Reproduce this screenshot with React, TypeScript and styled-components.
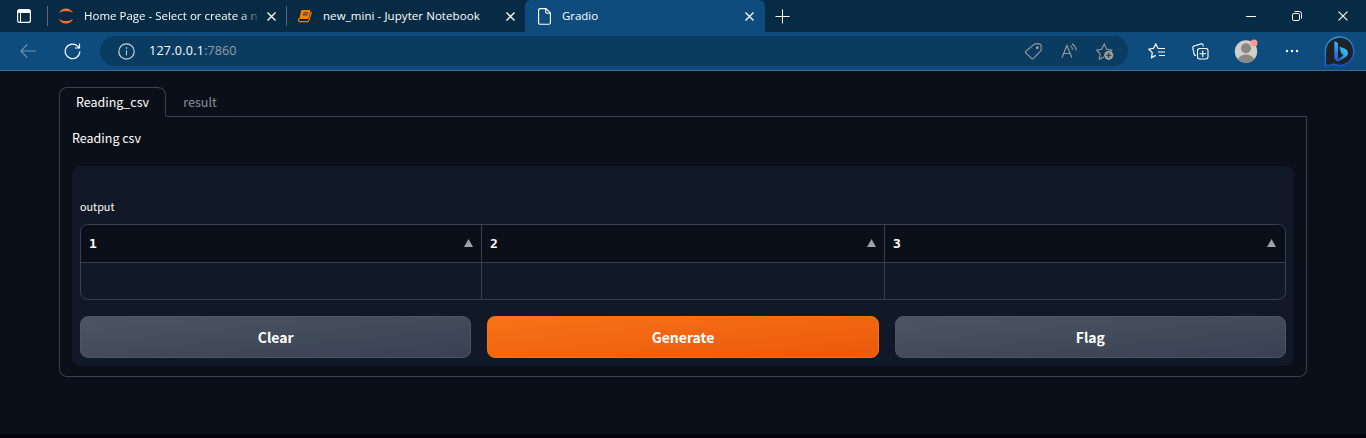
import React from 'react';
import styled, { createGlobalStyle, css } from 'styled-components';

const Global = createGlobalStyle`
  * { box-sizing: border-box; }
  body { margin: 0; background: #0b0f19; overflow: hidden; }
  button { font: inherit; margin: 0; padding: 0; border: 0; background: none; color: inherit; }
  svg { display: block; flex: none; }
`;

const Window = styled.div`
  height: 438px;
  display: flex;
  flex-direction: column;
  background: #0b0f19;
  color: #fff;
`;

const TitleBar = styled.header`
  height: 32px;
  flex: none;
  display: flex;
  align-items: stretch;
  background: #082b45;
  font: 11.5px/32px 'Open Sans', 'Noto Sans', sans-serif;
`;

const WorkspaceButton = styled.button`
  width: 47px;
  display: flex;
  align-items: center;
  padding-left: 17px;
`;

const Divider = styled.span`
  width: 1px;
  height: 20px;
  margin-top: 6px;
  background: #546b7d;
`;

const BrowserTab = styled.div<{ $width: number; $active?: boolean }>`
  width: ${p => p.$width}px;
  flex: none;
  display: flex;
  align-items: center;
  padding-left: 10px;
  ${p => p.$active && css`
    padding-left: 13px;
    background: #0d4c7c;
    border-radius: 6px 6px 0 0;
  `}
`;

const TabTitle = styled.span<{ $gap: number; $spacing: number; $fade?: boolean }>`
  flex: 1;
  min-width: 0;
  margin-left: ${p => p.$gap}px;
  letter-spacing: ${p => p.$spacing}px;
  white-space: nowrap;
  ${p => p.$fade && css`
    margin-right: -4px;
    mask-image: linear-gradient(90deg, #000 calc(100% - 20px), transparent 100%);
  `}
`;

const CloseTab = styled.button<{ $width?: number }>`
  width: ${p => p.$width ?? 30}px;
  flex: none;
  padding-left: 10px;
`;

const WindowControls = styled.div`
  display: flex;
  margin-left: auto;
`;

const ControlButton = styled.button<{ $width?: number }>`
  width: ${p => p.$width ?? 46}px;
  display: grid;
  place-items: center;
`;

const NavBar = styled.nav`
  height: 39px;
  flex: none;
  display: flex;
  align-items: center;
  background: #0d4c7c;
  border-bottom: 1px solid #3d7095;
`;

const NavButton = styled.button<{ $width: number; $indent?: number }>`
  width: ${p => p.$width}px;
  flex: none;
  height: 38px;
  padding-left: ${p => p.$indent ?? 0}px;
  display: grid;
  place-items: center;
`;

const AddressBar = styled.div`
  width: 1028px;
  flex: none;
  height: 30px;
  margin-left: 12px;
  display: flex;
  align-items: center;
  padding: 0 5px 0 17.5px;
  border-radius: 15px;
  background: #0a3b60;
`;

const Url = styled.span`
  margin-left: 14.5px;
  flex: 1;
  font: 12.5px/30px 'Open Sans', 'Noto Sans', sans-serif;
  letter-spacing: 0.27px;
  span { color: #9d9d9d; letter-spacing: 0.1px; }
`;

const Page = styled.main`
  flex: 1;
  padding: 16px 59px 0;
  font-family: 'Noto Sans CJK SC', sans-serif;
`;

const TabRow = styled.div`
  height: 30px;
  display: flex;
  &::after { content: ''; flex: 1; border-bottom: 1px solid #374151; }
`;

const PageTab = styled.button<{ $selected?: boolean }>`
  width: ${p => (p.$selected ? 107 : 68)}px;
  height: 30px;
  font-size: 12.5px;
  line-height: 27px;
  padding-bottom: 1px;
  color: #898f99;
  border: 1px solid transparent;
  border-bottom-color: #374151;
  ${p => p.$selected && css`
    color: #fff;
    border-color: #374151;
    border-bottom-color: transparent;
    border-radius: 8px 8px 0 0;
  `}
`;

const TabPanel = styled.section`
  height: 260px;
  padding: 11px 12px 12px;
  border: 1px solid #374151;
  border-top: 0;
  border-radius: 0 0 8px 8px;
`;

const Heading = styled.p`
  margin: 0 0 18px;
  height: 20px;
  font-size: 12.5px;
  line-height: 20px;
  color: #fff;
`;

const Form = styled.div`
  height: 200px;
  padding: 32px 8px 8px;
  background: #111827;
  border-radius: 8px;
`;

const Label = styled.div`
  height: 26px;
  font-size: 10.8px;
  line-height: 16px;
  color: #fff;
`;

const Grid = styled.div`
  height: 76px;
  margin-bottom: 16px;
  display: grid;
  grid-template-columns: 401px 403px 1fr;
  grid-template-rows: 38px 1fr;
  border: 1px solid #374151;
  border-radius: 8px;
  overflow: hidden;
`;

const Cell = styled.div<{ $head?: boolean }>`
  display: flex;
  align-items: center;
  justify-content: space-between;
  padding: 0 8.5px 0 8px;
  font: bold 13px/20px 'DejaVu Sans Mono', monospace;
  border-right: 1px solid #374151;
  svg { margin-bottom: 1px; }
  &:nth-child(3n) { border-right: 0; padding-right: 9px; }
  ${p => p.$head && css`background: #0b0f19; border-bottom: 1px solid #374151;`}
`;

const Actions = styled.div`
  display: flex;
  gap: 16px;
`;

const ActionButton = styled.button<{ $primary?: boolean }>`
  flex: 1;
  height: 42px;
  border: 1px solid ${p => (p.$primary ? '#f97316' : '#4b5563')};
  border-radius: 8px;
  background: ${p => p.$primary
    ? 'linear-gradient(to bottom right, #f97316, #ea580c)'
    : 'linear-gradient(to bottom right, #4b5563, #374151)'};
  font-size: 14px;
  line-height: 40px;
  font-weight: 700;
`;

const BottomEdge = styled.footer`
  height: 4px;
  background: #05020b;
`;

const CloseGlyph = ({ size = 9 }: { size?: number }) => (
  <svg width={size} height={size} viewBox="0 0 9 9" stroke="#fff" strokeWidth={size > 9 ? 1 : 1.25}>
    <path d="M.5.5l8 8M8.5.5l-8 8" />
  </svg>
);

const JupyterLogo = () => (
  <svg width="16" height="16" viewBox="0 0 16 16" fill="#f37726">
    <path d="M.9 5.3C2.2 2 5 .4 8 .4s5.800 1.600 7.100 4.900C13.300 3.700 10.900 3 8 3S2.700 3.700.9 5.300z" />
    <path d="M.9 10.700C2.200 14 5 15.600 8 15.600s5.800-1.600 7.100-4.900C13.300 12.300 10.900 13 8 13s-5.300-.7-7.100-2.300z" />
  </svg>
);

const NotebookIcon = () => (
  <svg width="16" height="16" viewBox="0 0 16 16">
    <path d="M4.900 2h7.800q1.100 0 .8 1.100L11.400 10.200q-.3.900-1.300.9H2.200L4.100 3Q4.300 2 4.900 2z" fill="#f98000" />
    <path d="M2 10.500Q.8 13.600 2.900 13.600h7.500q1.100 0 1.400-1L14.400 4" fill="none" stroke="#f98000" strokeWidth="1.200" />
    <path d="M6.200 4.900h5M5.600 6.900h5" stroke="#082b45" strokeWidth=".9" />
  </svg>
);

const PageIcon = () => (
  <svg width="13" height="17" viewBox="0 0 13 17" fill="none" stroke="#fff" strokeWidth="1.100">
    <path d="M2.200.6H8L12.400 5v9.700q0 1.600-1.600 1.600H2.200Q.6 16.300.6 14.700V2.200Q.6.600 2.200.6zM7.700.8v3.100q0 1.300 1.300 1.300h3.200" />
  </svg>
);

const BingIcon = () => (
  <svg width="32" height="32" viewBox="0 0 32 32">
    <defs>
      <linearGradient id="ring" x1="0" y1="0" x2=".3" y2="1">
        <stop stopColor="#2ba0df" /><stop offset="1" stopColor="#1d52d5" />
      </linearGradient>
      <linearGradient id="stem" x1="0" y1="0" x2="0" y2="1">
        <stop stopColor="#38b5f5" /><stop offset="1" stopColor="#2256dd" />
      </linearGradient>
      <linearGradient id="bowl" x1="1" y1="0" x2="0" y2="1">
        <stop stopColor="#38dced" /><stop offset=".5" stopColor="#2d9af2" /><stop offset="1" stopColor="#2361e6" />
      </linearGradient>
    </defs>
    <path d="M2.400 30.300V15.900A14.200 14.200 0 1 1 10.500 29Q7.500 30.600 2.400 30.300z" fill="#202225" stroke="url(#ring)" strokeWidth="1.400" />
    <path d="M11.300 6.300l2.600 1q1.100.5 1.100 1.700v13l1 1-2.500 2.500q-2.200-.4-2.200-2.800z" fill="url(#stem)" />
    <path d="M17.200 11.700l5.200 2.300q2.600 1.300 2.600 4.200 0 2.400-2.200 3.800l-6 3.600q-2.700 1.300-4.800-.2 2.600.2 4.600-1.700l3.800-3.500-1.500-1.200q-.7-.5-.9-1.400l-1.300-4.400q-.3-1.500.5-1.500z" fill="url(#bowl)" />
  </svg>
);

const SortArrow = () => (
  <svg width="9" height="8" viewBox="0 0 9 8" fill="#9ca3af"><path d="M4.500 0L9 8H0z" /></svg>
);

export default function App() {
  return (
    <Window>
      <Global />
      <TitleBar>
        <WorkspaceButton>
          <svg width="14" height="14" viewBox="0 0 14 14" fill="none" stroke="#fff">
            <rect x=".6" y=".6" width="12.800" height="12.800" rx="2" strokeWidth="1.200" />
            <path d="M1 2.500h12" strokeWidth="3" /><path d="M3.500 4v9" />
          </svg>
        </WorkspaceButton>
        <Divider />
        <BrowserTab $width={238}>
          <JupyterLogo />
          <TabTitle $gap={10} $spacing={0} $fade>Home Page - Select or create a n</TabTitle>
          <CloseTab $width={29}><CloseGlyph /></CloseTab>
        </BrowserTab>
        <Divider />
        <BrowserTab $width={238}>
          <NotebookIcon />
          <TabTitle $gap={10} $spacing={0.07}>new_mini - Jupyter Notebook</TabTitle>
          <CloseTab $width={29}><CloseGlyph /></CloseTab>
        </BrowserTab>
        <BrowserTab $width={240} $active>
          <PageIcon />
          <TabTitle $gap={11} $spacing={-0.05}>Gradio</TabTitle>
          <CloseTab><CloseGlyph /></CloseTab>
        </BrowserTab>
        <ControlButton $width={35}>
          <svg width="15" height="15" viewBox="0 0 15 15" stroke="#fff"><path d="M7.500.5v14M.5 7.500h14" /></svg>
        </ControlButton>
        <WindowControls>
          <ControlButton><svg width="10" height="10" viewBox="0 0 10 10" stroke="#fff"><path d="M0 5.500h10" /></svg></ControlButton>
          <ControlButton>
            <svg width="10" height="10" viewBox="0 0 10 10" fill="none" stroke="#fff">
              <rect x=".5" y="2.500" width="7" height="7" rx="1.300" /><path d="M2.500.5h5q2 0 2 2v5" />
            </svg>
          </ControlButton>
          <ControlButton><CloseGlyph size={10} /></ControlButton>
        </WindowControls>
      </TitleBar>

      <NavBar>
        <NavButton $width={56}>
          <svg width="16" height="14" viewBox="0 0 16 14" fill="none" stroke="#6d94b0" strokeWidth="1.100"><path d="M16 7H.8M7.300.5L.8 7l6.500 6.500" /></svg>
        </NavButton>
        <NavButton $width={32}>
          <svg width="17" height="17" viewBox="0 0 17 17" fill="none" stroke="#fff" strokeWidth="1.200"><path d="M15.800 8.500a7.300 7.300 0 1 1-2-5.100L15.500 5M15.500.5V5H11" /></svg>
        </NavButton>
        <AddressBar>
          <svg width="17" height="17" viewBox="0 0 17 17" fill="none" stroke="#c8d4dd">
            <circle cx="8.500" cy="8.500" r="7.700" strokeWidth="1.200" /><path d="M8.500 7.300v5" /><circle cx="8.500" cy="5" r=".5" />
          </svg>
          <Url>127.0.0.1<span>:7860</span></Url>
          <NavButton $width={36}>
            <svg width="17" height="17" viewBox="0 0 17 17" fill="none" stroke="#a09b99" strokeWidth="1.100">
              <path d="M9.700.8l4.700.1q1.700.1 1.700 1.700l.1 4.700-7.700 8q-1 1-2 0L1 10.200q-1-1 0-2z" /><circle cx="12.300" cy="4.700" r=".9" fill="#a09b99" />
            </svg>
          </NavButton>
          <NavButton $width={36}>
            <svg width="17" height="16" viewBox="0 0 17 16" fill="none" stroke="#a09b99" strokeWidth="1.100">
              <path d="M1 14.500L5.900 2.500l4.900 12M2.700 10.500h6.400M9.500 2.700q1.800 1.500 2.100 4M11 .8q3.500 2 4.300 6.500" />
            </svg>
          </NavButton>
          <NavButton $width={36}>
            <svg width="18" height="17" viewBox="0 0 18 17" fill="none" stroke="#a09b99" strokeWidth="1.100">
              <path d="M8 14l-4.600 2.200.8-5.300L.7 7.100l5-.8L8.200 1l2.500 5.300 5.100.8-1.200 1.300" />
              <circle cx="12.700" cy="12.300" r="4.600" fill="#a09b99" stroke="none" /><path d="M12.700 9.600V15M10 12.300h5.400" stroke="#0a3b60" />
            </svg>
          </NavButton>
        </AddressBar>
        <NavButton $width={56}>
          <svg width="17" height="16" viewBox="0 0 17 16" fill="none" stroke="#fff" strokeWidth="1.200">
            <path d="M11 5.500l-1-.2L7.800.9 5.600 5.300l-4.800.8 3.500 3.500-.8 5 4.200-2.200M11 5.500h6M10 9h7M11 12.500h6" />
          </svg>
        </NavButton>
        <NavButton $width={32}>
          <svg width="17" height="17" viewBox="0 0 17 17" fill="none" stroke="#fff" strokeWidth="1.100">
            <path d="M4 12.500q-1.500 0-1.900-1.500L.8 5q-.4-1.500 1.200-2l7-2.100q1.500-.4 2 1l.3 1.600" />
            <rect x="5.500" y="5.500" width="10.500" height="10.500" rx="2.200" /><path d="M10.750 7.500v6.500M7.500 10.750H14" />
          </svg>
        </NavButton>
        <NavButton $width={60}>
          <svg width="24" height="24" viewBox="0 0 24 24">
            <defs><clipPath id="face"><circle cx="12" cy="12.500" r="11.200" /></clipPath></defs>
            <g clipPath="url(#face)"><rect width="24" height="24" fill="#d0cfcc" /><circle cx="12" cy="9.300" r="5" fill="#8b8783" /><ellipse cx="12" cy="22" rx="8.500" ry="6.500" fill="#8b8783" /></g>
            <circle cx="20" cy="4" r="3.500" fill="#ff9a95" />
          </svg>
        </NavButton>
        <NavButton $width={32}>
          <svg width="14" height="4" viewBox="0 0 14 4" fill="#fff"><circle cx="2" cy="2" r="1.200" /><circle cx="7" cy="2" r="1.200" /><circle cx="12" cy="2" r="1.200" /></svg>
        </NavButton>
        <NavButton $width={58} $indent={3}><BingIcon /></NavButton>
      </NavBar>

      <Page>
        <TabRow>
          <PageTab $selected>Reading_csv</PageTab>
          <PageTab>result</PageTab>
        </TabRow>
        <TabPanel>
          <Heading>Reading csv</Heading>
          <Form>
            <Label>output</Label>
            <Grid>
              {['1', '2', '3'].map(n => <Cell key={n} $head><span>{n}</span><SortArrow /></Cell>)}
              <Cell /><Cell /><Cell />
            </Grid>
            <Actions>
              <ActionButton>Clear</ActionButton>
              <ActionButton $primary>Generate</ActionButton>
              <ActionButton>Flag</ActionButton>
            </Actions>
          </Form>
        </TabPanel>
      </Page>
      <BottomEdge />
    </Window>
  );
}
